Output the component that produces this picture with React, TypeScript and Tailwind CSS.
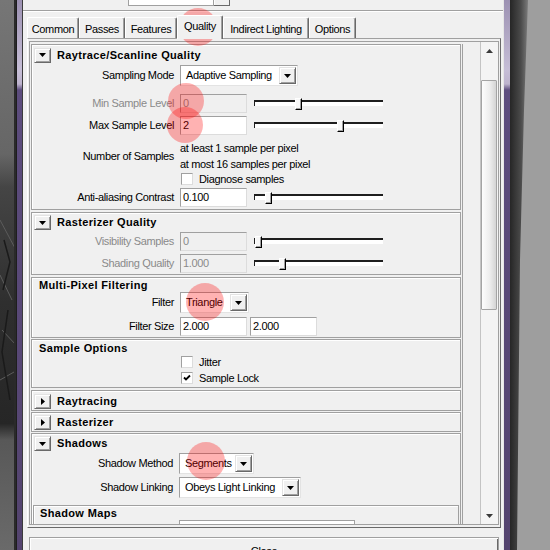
import React from "react";

type Dir = "down" | "up" | "right";

const Tri = ({ dir, fill = "#000" }: { dir: Dir; fill?: string }) => {
  const w = dir === "right" ? 4 : 7;
  const h = dir === "right" ? 7 : 4;
  const pts =
    dir === "down" ? "0,0 7,0 3.5,4" : dir === "up" ? "0,4 7,4 3.5,0" : "0,0 4,3.5 0,7";
  return (
    <svg width={w} height={h} viewBox={`0 0 ${w} ${h}`}>
      <polygon points={pts} fill={fill} />
    </svg>
  );
};

const FoldButton = ({ open }: { open: boolean }) => (
  <div className="ml-[2px] flex h-[15px] w-[17px] items-center justify-center border border-t-[#e3e3e3] border-l-[#e3e3e3] border-r-[#696969] border-b-[#696969] bg-[#f0f0f0] shadow-[inset_1px_1px_0_#fff,inset_-1px_-1px_0_#a0a0a0]">
    <Tri dir={open ? "down" : "right"} />
  </div>
);

interface SectionProps {
  title: string;
  fold?: boolean;
  open?: boolean;
  head?: string;
  className?: string;
  children?: React.ReactNode;
}

const Section = ({ title, fold = true, open = true, head = "h-[19px]", className = "", children }: SectionProps) => (
  <div className={`mx-[1px] shrink-0 border border-[#a0a0a0] shadow-[inset_1px_1px_0_#fff] ${className}`}>
    <div className={`flex items-center ${head}`}>
      {fold && <FoldButton open={open} />}
      <span className={`${fold ? "ml-[6px]" : "ml-[7px]"} font-bold tracking-[0.35px]`}>{title}</span>
    </div>
    {children}
  </div>
);

const Row = ({
  label,
  disabled,
  className = "",
  children,
}: {
  label: string;
  disabled?: boolean;
  className?: string;
  children: React.ReactNode;
}) => (
  <div className={`flex items-center ${className}`}>
    <span className={`w-[142px] text-right ${disabled ? "text-[#8a8a8a]" : "text-black"}`}>{label}</span>
    <div className="ml-[6px] flex items-center">{children}</div>
  </div>
);

const Field = ({ value, disabled, w = "w-[67px]" }: { value: string; disabled?: boolean; w?: string }) => (
  <div
    className={`${w} flex h-[19px] items-center border border-t-[#a0a0a0] border-l-[#a0a0a0] border-r-[#dcdcdc] border-b-[#dcdcdc] pl-[2px] ${
      disabled ? "bg-[#f0f0f0] text-[#8a8a8a]" : "bg-white text-black"
    }`}
  >
    {value}
  </div>
);

const Slider = ({ at }: { at: number }) => (
  <div className="relative ml-[7px] h-[12px] w-[129px]">
    <div className="absolute left-0 right-0 top-[2px] h-[6px] border-t-2 border-l border-t-[#1e1e1e] border-l-[#1e1e1e] bg-white" />
    <div
      className="absolute top-0 h-[12px] w-[7px] border border-t-white border-l-white border-r-black border-b-black bg-[#f7f7f7] shadow-[inset_-1px_-1px_0_#a0a0a0]"
      style={{ left: at }}
    />
  </div>
);

const Dropdown = ({ value, w }: { value: string; w: string }) => (
  <div className={`${w} flex h-[21px] items-center border border-t-[#a0a0a0] border-l-[#a0a0a0] border-r-[#e3e3e3] border-b-[#e3e3e3] bg-white`}>
    <span className="flex-1 pl-[5px]">{value}</span>
    <div className="mr-[1px] flex h-[17px] w-[17px] items-center justify-center border border-t-[#e3e3e3] border-l-[#e3e3e3] border-r-[#696969] border-b-[#696969] bg-[#f0f0f0] shadow-[inset_1px_1px_0_#fff,inset_-1px_-1px_0_#a0a0a0]">
      <Tri dir="down" />
    </div>
  </div>
);

const Check = ({ label, checked, className = "" }: { label: string; checked?: boolean; className?: string }) => (
  <div className={`flex h-[12px] items-center pl-[149px] ${className}`}>
    <div className="flex h-[12px] w-[12px] items-center justify-center border border-t-[#a0a0a0] border-l-[#a0a0a0] border-r-[#dcdcdc] border-b-[#dcdcdc] bg-white">
      {checked && (
        <svg width="8" height="8" viewBox="0 0 8 8">
          <polyline points="1,3.5 3,5.5 7,1.5" fill="none" stroke="#000" strokeWidth="1.8" />
        </svg>
      )}
    </div>
    <span className="ml-[6px]">{label}</span>
  </div>
);

const Tab = ({ label, w, active }: { label: string; w: string; active?: boolean }) =>
  active ? (
    <div
      className={`${w} relative z-10 -mb-[1px] flex h-[24px] items-center justify-center rounded-t-[2px] border-l border-t border-r border-l-white border-t-white border-r-[#696969] bg-[#f0f0f0] pb-[2px] shadow-[inset_-1px_0_0_#a0a0a0]`}
    >
      {label}
    </div>
  ) : (
    <div
      className={`${w} flex h-[21px] items-center justify-center rounded-t-[2px] border-l border-t border-r border-l-white border-t-white border-r-[#696969] bg-[#f0f0f0] pt-[2px] shadow-[inset_-1px_0_0_#a0a0a0]`}
    >
      {label}
    </div>
  );

const ScrollBar = () => (
  <div className="flex h-full w-[18px] shrink-0 flex-col border-l border-[#c4c4c4] bg-[#f4f4f4]">
    <div className="flex h-[17px] items-center justify-center">
      <Tri dir="up" fill="#3a3a3a" />
    </div>
    <div className="mt-[21px] h-[230px] w-[16px] rounded-[1px] border border-[#a4a4a4] bg-[linear-gradient(to_right,#fdfdfd,#ededed_55%,#d4d4d4)]" />
    <div className="flex-1" />
    <div className="flex h-[17px] items-center justify-center">
      <Tri dir="down" fill="#3a3a3a" />
    </div>
  </div>
);

// viewport render behind the dialog, left edge
const LeftRender = () => (
  <svg width="16" height="550" viewBox="0 0 16 550" className="shrink-0">
    <defs>
      <linearGradient id="lr" x1="0" y1="0" x2="0" y2="1">
        <stop offset="0" stopColor="#767676" />
        <stop offset="0.28" stopColor="#666666" />
        <stop offset="0.34" stopColor="#454545" />
        <stop offset="0.55" stopColor="#2f2f2f" />
        <stop offset="0.77" stopColor="#262626" />
        <stop offset="0.8" stopColor="#585858" />
        <stop offset="1" stopColor="#6a6a6a" />
      </linearGradient>
    </defs>
    <rect width="16" height="550" fill="url(#lr)" />
    <path d="M0 220 L16 250 M0 275 L12 300 M2 330 L16 345 M0 380 L14 372" stroke="#5c5c5c" strokeWidth="1" />
    <path d="M4 240 L10 262 L3 290 M8 310 L2 352 L10 400" stroke="#1a1a1a" strokeWidth="1.5" fill="none" />
    <rect x="14" width="2" height="550" fill="#2a2a2a" />
  </svg>
);

const RightRender = () => (
  <svg width="40" height="550" viewBox="0 0 40 550" className="shrink-0">
    <defs>
      <linearGradient id="rr" x1="0" y1="0" x2="1" y2="0">
        <stop offset="0" stopColor="#262626" />
        <stop offset="0.6" stopColor="#4a4a4a" />
        <stop offset="1" stopColor="#7a7a7a" />
      </linearGradient>
    </defs>
    <rect width="40" height="550" fill="#9e9e9e" />
    <polygon points="0,0 18,0 14,110 10,260 7,550 0,550" fill="url(#rr)" />
  </svg>
);

const Frame = ({ w }: { w: string }) => (
  <div className={`${w} h-full shrink-0 bg-[linear-gradient(to_bottom,#9c91b2_0px,#c6bed6_70px,#bdb3cd_84px,#5d4d7e_90px,#54446f_100%)]`} />
);

export default function App() {
  return (
    <div className="relative flex h-[550px] w-[550px] overflow-hidden bg-[#9e9e9e] font-['Liberation_Sans',Arial,sans-serif] text-[11px] leading-[13px] tracking-[-0.35px] text-black">
      <LeftRender />

      {/* dialog window */}
      <div className="flex h-full w-[494px] shrink-0 border-l border-[#1e1e1e]">
        <Frame w="w-[5px]" />
        <div className="flex h-full w-[482px] shrink-0 flex-col border-l border-r border-l-[#3c3c3c] border-r-[#e6e6e6] bg-[#f0f0f0]">
          {/* preset bar */}
          <div className="flex h-[11px] shrink-0 items-start border-b border-[#a0a0a0] shadow-[0_1px_0_#fff]">
            <div className="ml-[105px] h-[6px] w-[86px] border-l border-r border-b border-[#a0a0a0] bg-white" />
            <div className="h-[6px] w-[16px] border-r border-b border-[#696969] bg-[#f0f0f0] shadow-[inset_1px_0_0_#fff]" />
          </div>

          {/* tabs */}
          <div className="mt-[4px] flex h-[23px] shrink-0 items-end pl-[4px]">
            <Tab label="Common" w="w-[52px]" />
            <Tab label="Passes" w="w-[46px]" />
            <Tab label="Features" w="w-[52px]" />
            <Tab label="Quality" w="w-[46px]" active />
            <Tab label="Indirect Lighting" w="w-[86px]" />
            <Tab label="Options" w="w-[47px]" />
          </div>

          {/* tab page */}
          <div className="ml-[4px] flex h-[490px] w-[474px] shrink-0 flex-col border border-t-[#a0a0a0] border-l-white border-r-[#696969] border-b-[#696969] px-[1px] pb-[2px] pt-[2px]">
            <div className="flex h-[484px] border border-[#a0a0a0]">
              <div className="flex h-full w-[450px] flex-col overflow-hidden pt-[2px]">
                <div className="flex w-[433px] flex-col border-r border-[#a0a0a0]">
                  <Section title="Raytrace/Scanline Quality" head="h-[20px]" className="h-[166px]">
                    <Row label="Sampling Mode">
                      <Dropdown value="Adaptive Sampling" w="w-[118px]" />
                    </Row>
                    <Row label="Min Sample Level" disabled className="mt-[8px]">
                      <Field value="0" disabled />
                      <Slider at={41} />
                    </Row>
                    <Row label="Max Sample Level" className="mt-[3px]">
                      <Field value="2" />
                      <Slider at={83} />
                    </Row>
                    <Row label="Number of Samples" className="mt-[5px] h-[32px]">
                      <div className="flex flex-col leading-[16px]">
                        <span>at least 1 sample per pixel</span>
                        <span>at most 16 samples per pixel</span>
                      </div>
                    </Row>
                    <Check label="Diagnose samples" className="mt-[1px]" />
                    <Row label="Anti-aliasing Contrast" className="mt-[3px]">
                      <Field value="0.100" />
                      <Slider at={11} />
                    </Row>
                  </Section>

                  <Section title="Rasterizer Quality" className="mt-[2px] h-[63px]">
                    <Row label="Visibility Samples" disabled>
                      <Field value="0" disabled />
                      <Slider at={1} />
                    </Row>
                    <Row label="Shading Quality" disabled className="mt-[3px]">
                      <Field value="1.000" disabled />
                      <Slider at={25} />
                    </Row>
                  </Section>

                  <Section title="Multi-Pixel Filtering" fold={false} head="h-[14px]" className="mt-[2px] h-[61px]">
                    <Row label="Filter">
                      <Dropdown value="Triangle" w="w-[69px]" />
                    </Row>
                    <Row label="Filter Size" className="mt-[4px]">
                      <Field value="2.000" />
                      <div className="ml-[3px]">
                        <Field value="2.000" />
                      </div>
                    </Row>
                  </Section>

                  <Section title="Sample Options" fold={false} head="h-[16px]" className="mt-[1px] h-[49px]">
                    <Check label="Jitter" />
                    <Check label="Sample Lock" checked className="mt-[4px]" />
                  </Section>

                  <Section title="Raytracing" open={false} head="h-[20px]" className="mt-[2px] h-[21px]" />
                  <Section title="Rasterizer" open={false} head="h-[18px]" className="mt-[1px] h-[20px]" />

                  <Section title="Shadows" className="mt-[1px] h-[120px]">
                    <Row label="Shadow Method" className="-ml-[1px]">
                      <Dropdown value="Segments" w="w-[75px]" />
                    </Row>
                    <Row label="Shadow Linking" className="-ml-[1px] mt-[3px]">
                      <Dropdown value="Obeys Light Linking" w="w-[122px]" />
                    </Row>
                    <div className="mx-[1px] mt-[7px] h-[40px] border border-[#a0a0a0] shadow-[inset_1px_1px_0_#fff]">
                      <div className="flex h-[14px] items-center pl-[6px] font-bold tracking-[0.35px]">Shadow Maps</div>
                      <div className="ml-[145px] h-[20px] w-[176px] border border-[#a0a0a0] bg-white" />
                    </div>
                  </Section>
                </div>
              </div>
              <ScrollBar />
            </div>
          </div>

          {/* close button */}
          <div className="ml-[6px] mt-[9px] flex h-[24px] w-[470px] shrink-0 justify-center border border-[#a0a0a0] pt-[7px] shadow-[inset_1px_1px_0_#fff,inset_-1px_-1px_0_#696969]">
            Close
          </div>
        </div>
        <Frame w="w-[6px]" />
      </div>

      <RightRender />

      {/* highlight marks */}
      <div className="pointer-events-none absolute left-[179px] top-[8px] h-[38px] w-[38px] rounded-full bg-[rgba(255,0,0,0.3)] blur-[0.6px]" />
      <div className="pointer-events-none absolute left-[168px] top-[83px] h-[36px] w-[36px] rounded-full bg-[rgba(255,0,0,0.3)] blur-[0.6px]" />
      <div className="pointer-events-none absolute left-[167px] top-[107px] h-[36px] w-[36px] rounded-full bg-[rgba(255,0,0,0.3)] blur-[0.6px]" />
      <div className="pointer-events-none absolute left-[186px] top-[283px] h-[38px] w-[38px] rounded-full bg-[rgba(255,0,0,0.3)] blur-[0.6px]" />
      <div className="pointer-events-none absolute left-[187px] top-[442px] h-[38px] w-[38px] rounded-full bg-[rgba(255,0,0,0.3)] blur-[0.6px]" />
    </div>
  );
}
